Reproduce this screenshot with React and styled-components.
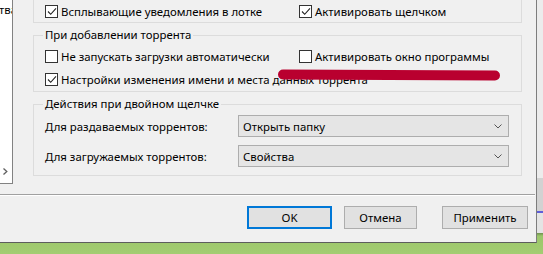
import React from "react"
import styled, { createGlobalStyle } from "styled-components"

const GlobalStyle = createGlobalStyle`
  html, body {
    margin: 0;
    padding: 0;
    background: #93c063;
  }
  body {
    font-family: "Noto Sans", "Open Sans", sans-serif;
    font-size: 11.4px;
    color: #000;
  }
`

const Desktop = styled.div`
  width: 543px;
  height: 254px;
  overflow: hidden;
  background: linear-gradient(
    to bottom,
    #ececec 0,
    #ececec 178px,
    #d2d2d2 178px,
    #d2d2d2 211px,
    #5e5ed8 211px,
    #5e5ed8 213px,
    #e4e4e4 213px,
    #e4e4e4 233px,
    #6f8f4f 233px,
    #9cc66a 236px,
    #a3cd72 254px
  );
`

const Dialog = styled.div`
  width: 536px;
  height: 242px;
  background: #f0f0f0;
  border-right: 1px solid #7d7d7d;
  border-bottom: 1px solid #5d5d5d;
  display: flex;
  flex-direction: column;
`

const TopArea = styled.div`
  display: flex;
  height: 194px;
`

const Tree = styled.div`
  width: 12px;
  height: 183px;
  background: #fff;
  border-right: 1px solid #828282;
  border-bottom: 1px solid #828282;
  display: flex;
  flex-direction: column;
  justify-content: space-between;
  overflow: hidden;
`

const TreeItem = styled.div`
  white-space: nowrap;
  margin-top: 2px;
  margin-left: -1px;
  line-height: 16px;
`

const ScrollArrow = styled.div`
  height: 16px;
  display: flex;
  align-items: center;
  padding-left: 3px;
  margin-bottom: 4px;
`

const Content = styled.div`
  padding-left: 20px;
  width: 489px;
  display: flex;
  flex-direction: column;
`

const TopGroup = styled.div`
  height: 22px;
  border: 1px solid #dcdcdc;
  border-top: none;
  display: grid;
  grid-template-columns: 254px 1fr;
  align-items: center;
  padding-left: 11px;
`

const Group = styled.fieldset`
  position: relative;
  margin: ${(p) => p.$top}px 0 0;
  padding: 0 10px ${(p) => p.$bottom}px 11px;
  border: 1px solid #dcdcdc;
  min-width: 0;
`

const Legend = styled.legend`
  padding: 0 2px;
  margin-left: -2px;
  line-height: 16px;
`

const CheckGrid = styled.div`
  display: grid;
  grid-template-columns: 254px 1fr;
  row-gap: 6px;
  margin-top: 5px;
  align-items: center;
`

const CheckRow = styled.label`
  display: flex;
  align-items: center;
  gap: 3px;
  white-space: nowrap;
  line-height: 17px;
  grid-column: ${(p) => (p.$wide ? "1 / 3" : "auto")};
`

const Box = styled.span`
  width: 11px;
  height: 11px;
  border: 1px solid #333;
  background: #fff;
  display: inline-flex;
  align-items: center;
  justify-content: center;
  flex: none;
`

const Mark = styled.div`
  position: absolute;
  left: 244px;
  top: 27px;
  width: 222px;
  height: 10px;
  border-radius: 5px;
  background: #b9002f;
  transform: rotate(0.3deg);
`

const ComboRows = styled.div`
  display: flex;
  flex-direction: column;
  gap: 8px;
  margin-top: 3px;
`

const ComboRow = styled.div`
  display: flex;
  align-items: center;
`

const ComboLabel = styled.span`
  width: 193px;
  white-space: nowrap;
`

const Combo = styled.div`
  width: 259px;
  height: 20px;
  background: #e5e5e5;
  border: 1px solid #adadad;
  display: flex;
  align-items: center;
  justify-content: space-between;
  padding: 0 6px 0 4px;
`

const Separator = styled.div`
  height: 1px;
  background: #a0a0a0;
  border-bottom: 1px solid #fff;
  margin-right: 1px;
`

const Buttons = styled.div`
  display: flex;
  justify-content: flex-end;
  padding: 10px 8px 0 0;
`

const Button = styled.button`
  font: inherit;
  color: #000;
  width: ${(p) => p.$w}px;
  height: 23px;
  margin-left: ${(p) => p.$gap}px;
  background: #e1e1e1;
  border: ${(p) => (p.$primary ? "2px solid #0078d7" : "1px solid #adadad")};
  padding: 0;
  line-height: 1;
`

const Check = ({ checked }) => (
  <Box>
    {checked && (
      <svg width="10" height="9" viewBox="0 0 10 9">
        <polyline points="1,4.5 3.7,7.3 9,1.3" fill="none" stroke="#222" strokeWidth="1.1" />
      </svg>
    )}
  </Box>
)

const Chevron = () => (
  <svg width="8" height="5" viewBox="0 0 8 5">
    <polyline points="0.5,0.5 4,4 7.5,0.5" fill="none" stroke="#555" strokeWidth="1" />
  </svg>
)

export default function App() {
  return (
    <Desktop>
      <GlobalStyle />
      <Dialog>
        <TopArea>
          <Tree>
            <TreeItem>тва</TreeItem>
            <ScrollArrow>
              <svg width="5" height="7" viewBox="0 0 5 7">
                <polyline points="0.5,0.5 3.8,3.5 0.5,6.5" fill="none" stroke="#606060" strokeWidth="1.3" />
              </svg>
            </ScrollArrow>
          </Tree>
          <Content>
            <TopGroup>
              <CheckRow>
                <Check checked />
                Всплывающие уведомления в лотке
              </CheckRow>
              <CheckRow>
                <Check checked />
                Активировать щелчком
              </CheckRow>
            </TopGroup>
            <Group $top={4} $bottom={3}>
              <Legend>При добавлении торрента</Legend>
              <CheckGrid>
                <CheckRow>
                  <Check />
                  Не запускать загрузки автоматически
                </CheckRow>
                <CheckRow>
                  <Check />
                  Активировать окно программы
                </CheckRow>
                <CheckRow $wide>
                  <Check checked />
                  Настройки изменения имени и места данных торрента
                </CheckRow>
              </CheckGrid>
              <Mark />
            </Group>
            <Group $top={4} $bottom={8}>
              <Legend>Действия при двойном щелчке</Legend>
              <ComboRows>
                <ComboRow>
                  <ComboLabel>Для раздаваемых торрентов:</ComboLabel>
                  <Combo>
                    Открыть папку
                    <Chevron />
                  </Combo>
                </ComboRow>
                <ComboRow>
                  <ComboLabel>Для загружаемых торрентов:</ComboLabel>
                  <Combo>
                    Свойства
                    <Chevron />
                  </Combo>
                </ComboRow>
              </ComboRows>
            </Group>
          </Content>
        </TopArea>
        <Separator />
        <Buttons>
          <Button $w={85} $gap={0} $primary>OK</Button>
          <Button $w={73} $gap={12}>Отмена</Button>
          <Button $w={86} $gap={25}>Применить</Button>
        </Buttons>
      </Dialog>
    </Desktop>
  )
}
